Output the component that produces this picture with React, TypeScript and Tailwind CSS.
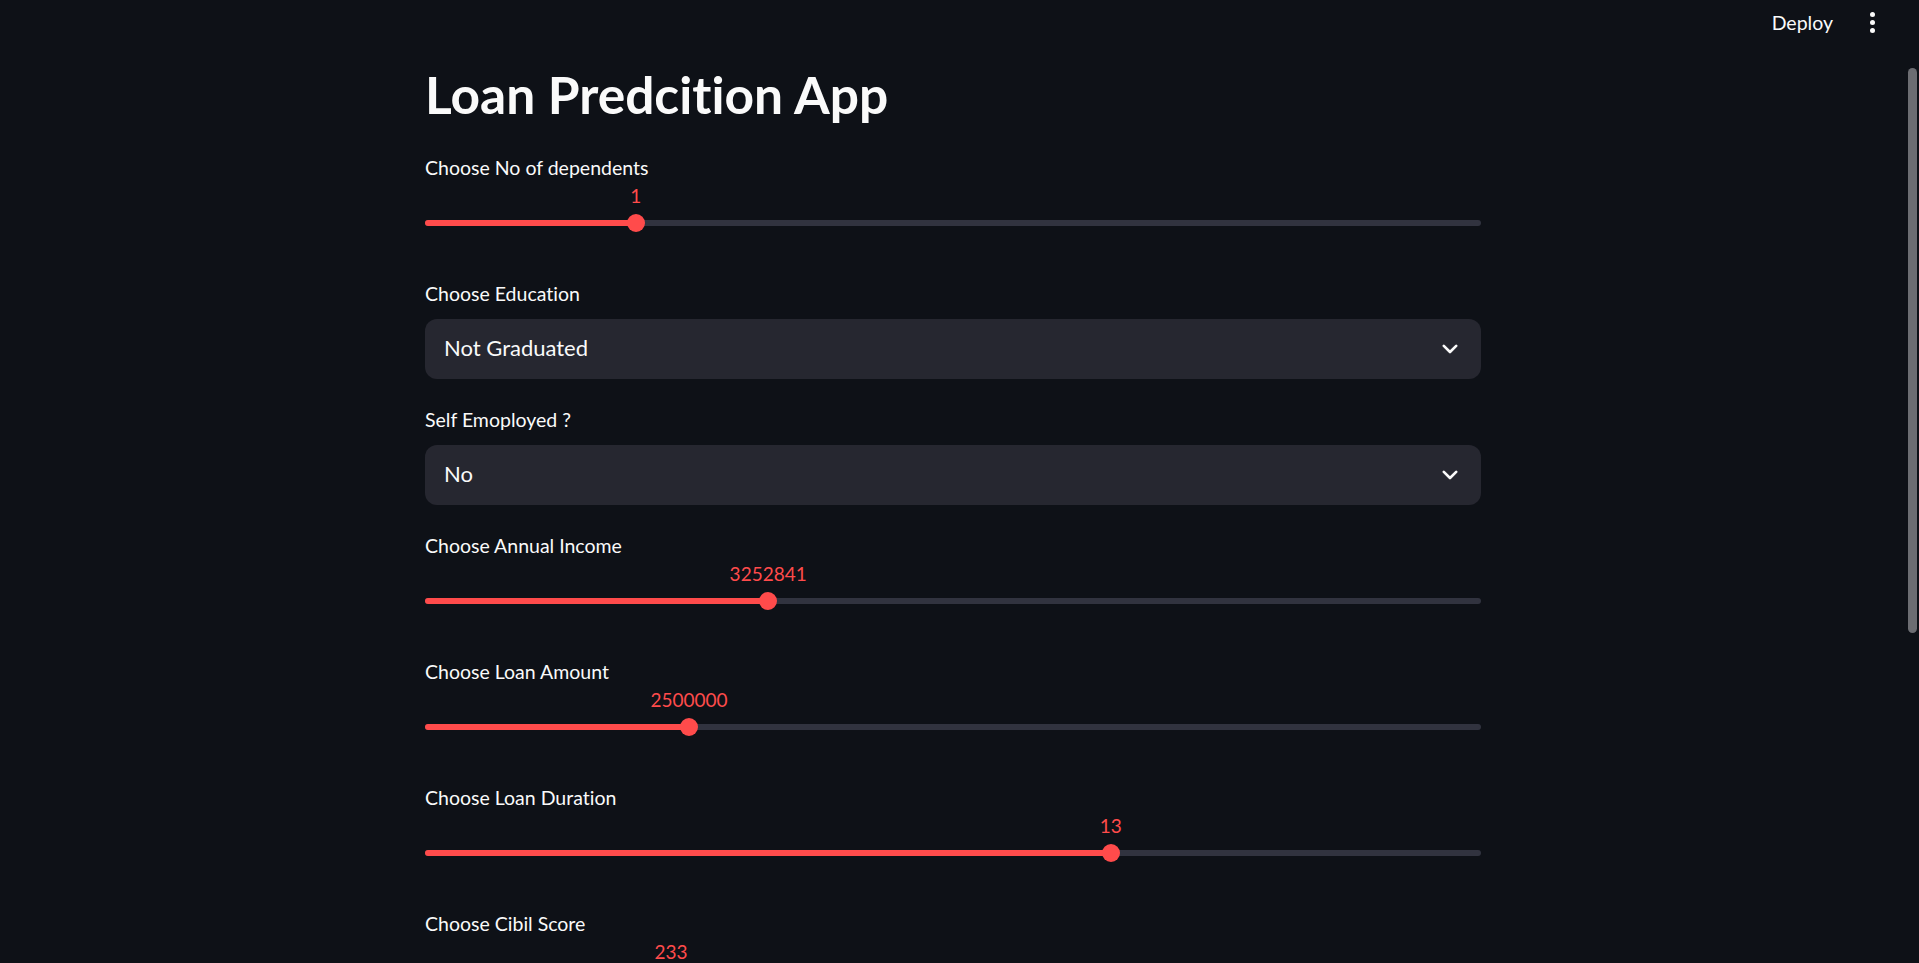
import { useState } from "react"

type Field =
  | { kind: "slider"; label: string; value: string; pct: number }
  | { kind: "select"; label: string; value: string }

// form fields, top to bottom
const fields: Field[] = [
  { kind: "slider", label: "Choose No of dependents", value: "1", pct: 19.95 },
  { kind: "select", label: "Choose Education", value: "Not Graduated" },
  { kind: "select", label: "Self Emoployed ?", value: "No" },
  { kind: "slider", label: "Choose Annual Income", value: "3252841", pct: 32.5 },
  { kind: "slider", label: "Choose Loan Amount", value: "2500000", pct: 25 },
  { kind: "slider", label: "Choose Loan Duration", value: "13", pct: 64.95 },
  { kind: "slider", label: "Choose Cibil Score", value: "233", pct: 23.3 },
]

function Chevron() {
  return (
    <svg width="16" height="10" viewBox="0 0 16 10" fill="none">
      <path d="M1.8 1.8 L8 8 L14.2 1.8" stroke="#fafafa" strokeWidth="2.6" strokeLinecap="round" strokeLinejoin="round" />
    </svg>
  )
}

function Slider({ label, value, pct }: { label: string; value: string; pct: number }) {
  return (
    <div className="h-[102px]">
      <label className="block h-[26px] text-[19.5px] leading-[26px] text-[#fafafa]">{label}</label>
      <div className="relative h-[76px]">
        <div className="absolute top-[39px] left-0 right-0 h-[6px] rounded-full bg-[#31333f]">
          <div className="h-full rounded-full bg-[#ff4b4b]" style={{ width: `${pct}%` }} />
        </div>
        <div
          className="absolute top-[33px] h-[18px] w-[18px] -ml-[9px] rounded-full bg-[#ff4b4b]"
          style={{ left: `${pct}%` }}
        />
        <div
          className="absolute top-[2px] -translate-x-1/2 text-[19px] leading-[26px] text-[#ff4b4b] whitespace-nowrap"
          style={{ left: `${pct}%` }}
        >
          {value}
        </div>
      </div>
    </div>
  )
}

function Select({ label, value }: { label: string; value: string }) {
  const [open, setOpen] = useState(false)
  return (
    <div className="h-[102px]">
      <label className="block h-[26px] text-[19.5px] leading-[26px] text-[#fafafa]">{label}</label>
      <button
        onClick={() => setOpen(!open)}
        className="mt-[12px] flex h-[60px] w-full items-center justify-between rounded-[12px] bg-[#262730] pl-[19px] pr-[23px] text-left"
      >
        <span className="mb-[4px] text-[22px] text-[#fafafa]">{value}</span>
        <Chevron />
      </button>
    </div>
  )
}

export default function App() {
  return (
    <div className="flex h-screen overflow-hidden bg-[#0e1117] font-['Lato','Noto_Sans',sans-serif] text-[#fafafa] [font-variant-ligatures:none]">
      <div className="flex-1">
        {/* Header */}
        <div className="flex h-[45px] items-center justify-end pr-[24px]">
          <span className="text-[19.5px] text-[#fafafa]">Deploy</span>
          <div className="ml-[29px] flex w-[20px] flex-col items-center gap-[2.6px]">
            <span className="h-[5px] w-[5px] rounded-full bg-[#fafafa]" />
            <span className="h-[5px] w-[5px] rounded-full bg-[#fafafa]" />
            <span className="h-[5px] w-[5px] rounded-full bg-[#fafafa]" />
          </div>
        </div>

        <div className="mx-auto w-[1056px]">
          <h1 className="mt-[17px] mb-[29px] h-[64px] text-[51.5px] font-bold leading-[64px] text-[#fafafa]">
            Loan Predcition App
          </h1>
          <div className="flex flex-col gap-[24px]">
            {fields.map((f) =>
              f.kind === "slider" ? (
                <Slider key={f.label} label={f.label} value={f.value} pct={f.pct} />
              ) : (
                <Select key={f.label} label={f.label} value={f.value} />
              )
            )}
          </div>
        </div>
      </div>

      {/* Scrollbar */}
      <div className="w-[13px] pl-[2px] pt-[68px]">
        <div className="h-[565px] w-[9px] rounded-full bg-[#6c6d72]" />
      </div>
    </div>
  )
}
